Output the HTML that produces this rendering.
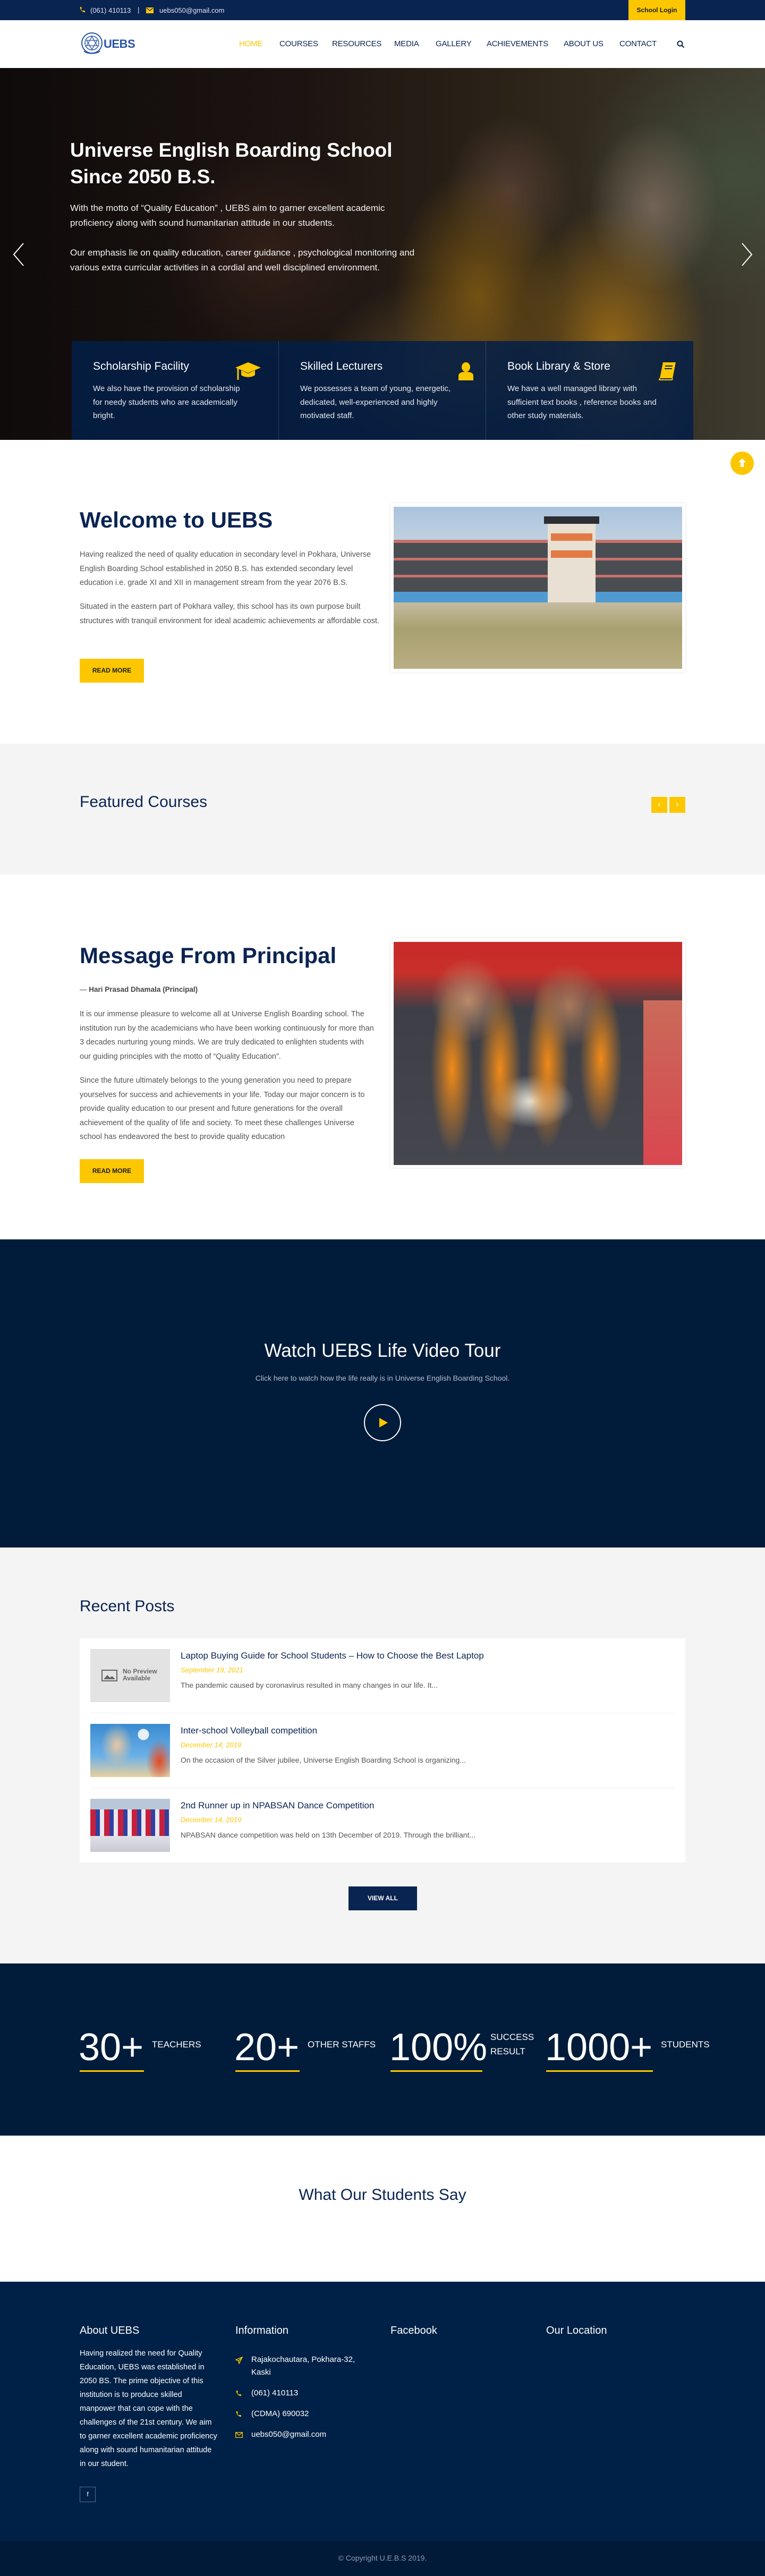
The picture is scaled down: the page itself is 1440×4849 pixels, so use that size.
<!DOCTYPE html>
<html><head><meta charset="utf-8"><style>
*{margin:0;padding:0;box-sizing:border-box}
body{width:1440px;height:4849px;position:relative;font-family:"Liberation Sans",Arial,sans-serif;background:#fff;overflow:hidden}
.a{position:absolute}
.navy{color:#0a2452}
.nav a{position:absolute;top:74px;font-size:15px;color:#0a2452;font-weight:500;letter-spacing:-.2px}
.btn{position:absolute;background:#fcc700;color:#1b1b1b;font-size:12px;font-weight:bold;text-align:center;line-height:45px;width:121px;height:45px}
.p{position:absolute;font-size:14.5px;line-height:26.5px;color:#555}
.feat{position:absolute;top:642px;width:390px;height:186px;border-right:1px solid rgba(255,255,255,.15)}
.feat h3{position:absolute;left:40px;top:36px;font-size:21px;font-weight:normal;color:#fff}
.feat p{position:absolute;left:40px;top:77px;width:290px;font-size:15px;line-height:25.5px;color:#e6e9ef}
.feat svg{position:absolute;left:308px;top:40px}
.post .t{position:absolute;left:340px;font-size:17px;color:#0a2452}
.post .d{position:absolute;left:340px;font-size:13px;font-style:italic;color:#fcc700}
.post .e{position:absolute;left:340px;font-size:14px;color:#555}
.stat .n{position:absolute;font-size:72px;color:#fff;line-height:1}
.stat .l{position:absolute;font-size:17px;color:#fff;line-height:27px}
.stat .u{position:absolute;height:3px;background:#fcc700}
.fh{position:absolute;top:4376px;font-size:20px;color:#fff}
.fi{position:absolute;left:473px;font-size:15px;color:#fff;line-height:24px}
</style></head><body>

<div class="a" style="left:0;top:0;width:1440px;height:38px;background:#0a2452"></div>
<svg class="a" style="left:149px;top:12px" width="11" height="13" viewBox="0 0 11 13"><path d="M2 1l2 0 1 3-1.5 1c.7 1.8 1.8 3 3.5 3.8L8 7.5l3 1v2.5c-5 .5-10-5-9-10z" fill="#fcc700"/></svg>
<div class="a" style="left:170px;top:12px;font-size:13px;color:#dfe4ee">(061) 410113</div>
<div class="a" style="left:259px;top:11px;font-size:13px;color:#dfe4ee">|</div>
<svg class="a" style="left:275px;top:14px" width="14" height="11" viewBox="0 0 14 11"><rect width="14" height="11" fill="#fcc700"/><path d="M1 1l6 5 6-5" stroke="#0a2452" stroke-width="1.3" fill="none"/></svg>
<div class="a" style="left:300px;top:12px;font-size:13px;color:#dfe4ee">uebs050@gmail.com</div>
<div class="a" style="left:1183px;top:0;width:107px;height:38px;background:#fcc700;font-size:12px;font-weight:bold;color:#1b1b1b;text-align:center;line-height:38px">School Login</div>

<div class="a" style="left:0;top:38px;width:1440px;height:90px;background:#fff"></div>
<svg class="a" style="left:152px;top:60px" width="42" height="46" viewBox="0 0 42 46"><circle cx="21" cy="21" r="19" fill="#fff" stroke="#2a55a8" stroke-width="2"/><circle cx="21" cy="21" r="13" fill="none" stroke="#2a55a8" stroke-width="1.5"/><path d="M21 9l10 17H11z M21 33L11 16h20z" fill="none" stroke="#2a55a8" stroke-width="1.3"/><path d="M6 36c5 6 25 6 30 0" stroke="#2a55a8" stroke-width="2" fill="none"/></svg>
<div class="a" style="left:195px;top:70px;font-size:22px;font-weight:bold;color:#2a55a8;letter-spacing:-.5px">UEBS</div>
<div class="nav">
<a style="left:450px;color:#fcc700">HOME</a>
<a style="left:526px">COURSES</a>
<a style="left:625px">RESOURCES</a>
<a style="left:742px">MEDIA</a>
<a style="left:820px">GALLERY</a>
<a style="left:916px">ACHIEVEMENTS</a>
<a style="left:1061px">ABOUT US</a>
<a style="left:1166px">CONTACT</a>
</div>
<svg class="a" style="left:1274px;top:76px" width="15" height="15" viewBox="0 0 15 15"><circle cx="6" cy="6" r="4.5" stroke="#0a2452" stroke-width="2" fill="none"/><path d="M9.5 9.5l4 4" stroke="#0a2452" stroke-width="2.2"/></svg>

<div class="a" style="left:0;top:128px;width:1440px;height:700px;overflow:hidden;background:
radial-gradient(ellipse 180px 260px at 1150px 520px,#b8801c,transparent),
radial-gradient(ellipse 160px 240px at 900px 430px,#9a6c18,transparent),
radial-gradient(ellipse 220px 160px at 820px 560px,#6e5630,transparent),
radial-gradient(ellipse 120px 160px at 1230px 260px,#8c7a6a,transparent),
radial-gradient(ellipse 120px 140px at 960px 230px,#6a4e40,transparent),
radial-gradient(ellipse 300px 250px at 1380px 200px,#4e5a44,transparent),
radial-gradient(ellipse 200px 200px at 500px 350px,#4a2e24,transparent),
linear-gradient(90deg,#1c1414,#2a1e1a 40%,#3a3020 70%,#4a4638)">
<div class="a" style="left:0;top:0;width:1440px;height:700px;background:linear-gradient(90deg,rgba(0,0,0,.45),rgba(0,0,0,.25) 60%,rgba(0,0,0,.15))"></div>
</div>
<div class="a" style="left:132px;top:258px;font-size:37px;font-weight:bold;color:#fff;line-height:50px;width:700px">Universe English Boarding School Since 2050 B.S.</div>
<div class="a" style="left:132px;top:378px;width:650px;font-size:17px;line-height:28px;color:#f2f2f2">With the motto of “Quality Education” , UEBS aim to garner excellent academic proficiency along with sound humanitarian attitude in our students.</div>
<div class="a" style="left:132px;top:462px;width:680px;font-size:17px;line-height:28px;color:#f2f2f2">Our emphasis lie on quality education, career guidance , psychological monitoring and various extra curricular activities in a cordial and well disciplined environment.</div>
<svg class="a" style="left:22px;top:456px" width="26" height="46" viewBox="0 0 26 46"><path d="M22 2L4 23l18 21" stroke="#fff" stroke-width="2" fill="none"/></svg>
<svg class="a" style="left:1393px;top:456px" width="26" height="46" viewBox="0 0 26 46"><path d="M4 2l18 21L4 44" stroke="#fff" stroke-width="2" fill="none"/></svg>
<div class="a" style="left:135px;top:642px;width:1170px;height:186px;background:rgba(2,30,72,.85)"></div>
<div class="feat" style="left:135px"><h3>Scholarship Facility</h3><p>We also have the provision of scholarship for needy students who are academically bright.</p>
<svg width="48" height="34" viewBox="0 0 48 34"><path d="M24 0L48 10 24 20 0 10z" fill="#fcc700"/><path d="M11 15v9c6 5 20 5 26 0v-9l-13 6z" fill="#fcc700"/><path d="M5 11v22" stroke="#fcc700" stroke-width="3"/></svg></div>
<div class="feat" style="left:525px"><h3>Skilled Lecturers</h3><p>We possesses a team of young, energetic, dedicated, well-experienced and highly motivated staff.</p>
<svg style="left:338px" width="28" height="34" viewBox="0 0 28 34"><ellipse cx="14" cy="9" rx="8" ry="9" fill="#fcc700"/><path d="M0 34v-8c0-6 5-8 14-8s14 2 14 8v8z" fill="#fcc700"/></svg></div>
<div class="feat" style="left:915px;border:0"><h3>Book Library &amp; Store</h3><p>We have a well managed library with sufficient text books , reference books and other study materials.</p>
<svg style="left:325px" width="34" height="34" viewBox="0 0 34 34"><path d="M8 0h24l-6 30H2z" fill="#fcc700"/><path d="M2 30l-1 3h24l1-3" stroke="#fcc700" stroke-width="2" fill="none"/><path d="M12 7h14M11 12h14" stroke="#0a2452" stroke-width="2"/></svg></div>

<div class="a" style="left:1375px;top:850px;width:44px;height:44px;border-radius:50%;background:#fcc700"></div>
<svg class="a" style="left:1389px;top:862px" width="16" height="18" viewBox="0 0 16 18"><path d="M8 1L1 8h4v9h6V8h4z" fill="#fff"/></svg>

<div class="a navy" style="left:150px;top:955px;font-size:42px;font-weight:bold">Welcome to UEBS</div>
<div class="p" style="left:150px;top:1031px;width:565px">Having realized the need of quality education in secondary level in Pokhara, Universe English Boarding School established in 2050 B.S. has extended secondary level education i.e. grade XI and XII in management stream from the year 2076 B.S.</div>
<div class="p" style="left:150px;top:1129px;width:565px">Situated in the eastern part of Pokhara valley, this school has its own purpose built structures with tranquil environment for ideal academic achievements ar affordable cost.</div>
<div class="btn" style="left:150px;top:1240px">READ MORE</div>
<div class="a" style="left:735px;top:947px;width:555px;height:318px;background:#fff;box-shadow:0 0 4px rgba(0,0,0,.12)"></div>
<div class="a" style="left:741px;top:954px;width:543px;height:305px;overflow:hidden;background:linear-gradient(#aac4de,#cfd9e0 35%,#a39468 60%,#b6a878)">
 <div class="a" style="left:0;top:62px;width:543px;height:118px;background:#4a4d52"></div>
 <div class="a" style="left:0;top:62px;width:543px;height:6px;background:#c9706a"></div>
 <div class="a" style="left:0;top:96px;width:543px;height:5px;background:#c9706a"></div>
 <div class="a" style="left:0;top:128px;width:543px;height:5px;background:#c9706a"></div>
 <div class="a" style="left:0;top:160px;width:543px;height:20px;background:#4f9bd1"></div>
 <div class="a" style="left:290px;top:28px;width:90px;height:152px;background:#e8e0d2"></div>
 <div class="a" style="left:296px;top:50px;width:78px;height:14px;background:#e27a45"></div>
 <div class="a" style="left:296px;top:82px;width:78px;height:14px;background:#e27a45"></div>
 <div class="a" style="left:283px;top:18px;width:104px;height:14px;background:#2b2e33"></div>
 <div class="a" style="left:0;top:180px;width:543px;height:125px;background:linear-gradient(#c4bba0,#a8a070 40%,#b9ae83)"></div>
</div>

<div class="a" style="left:0;top:1400px;width:1440px;height:246px;background:#f4f4f4"></div>
<div class="a navy" style="left:150px;top:1493px;font-size:30px;font-weight:500">Featured Courses</div>
<div class="a" style="left:1226px;top:1500px;width:30px;height:30px;background:#fcc700;color:#fff;text-align:center;line-height:30px;font-size:16px">‹</div>
<div class="a" style="left:1260px;top:1500px;width:30px;height:30px;background:#fcc700;color:#fff;text-align:center;line-height:30px;font-size:16px">›</div>

<div class="a navy" style="left:150px;top:1775px;font-size:42px;font-weight:bold">Message From Principal</div>
<div class="a" style="left:150px;top:1855px;font-size:13.5px;color:#444">— <b>Hari Prasad Dhamala (Principal)</b></div>
<div class="p" style="left:150px;top:1896px;width:555px">It is our immense pleasure to welcome all at Universe English Boarding school. The institution run by the academicians who have been working continuously for more than 3 decades nurturing young minds. We are truly dedicated to enlighten students with our guiding principles with the motto of “Quality Education”.</div>
<div class="p" style="left:150px;top:2021px;width:560px">Since the future ultimately belongs to the young generation you need to prepare yourselves for success and achievements in your life. Today our major concern is to provide quality education to our present and future generations for the overall achievement of the quality of life and society. To meet these challenges Universe school has endeavored the best to provide quality education</div>
<div class="btn" style="left:150px;top:2182px">READ MORE</div>
<div class="a" style="left:735px;top:1766px;width:555px;height:432px;background:#fff;box-shadow:0 0 4px rgba(0,0,0,.12)"></div>
<div class="a" style="left:741px;top:1773px;width:543px;height:420px;overflow:hidden;background:
radial-gradient(ellipse 70px 80px at 140px 110px,#b98a6a,transparent),
radial-gradient(ellipse 70px 80px at 330px 120px,#a8785a,transparent),
radial-gradient(ellipse 40px 160px at 110px 240px,#f08a18,transparent),
radial-gradient(ellipse 40px 160px at 200px 240px,#f08a18,transparent),
radial-gradient(ellipse 40px 160px at 290px 230px,#f08a18,transparent),
radial-gradient(ellipse 40px 140px at 390px 220px,#f08a18,transparent),
radial-gradient(ellipse 80px 50px at 260px 300px,#e8e4d8,transparent),
linear-gradient(#c82a2a 0,#c8302a 14%,#3e3f46 30%,#45464e)">
 <div class="a" style="left:470px;top:110px;width:73px;height:310px;background:linear-gradient(#c96a5a,#d9474f)"></div>
</div>

<div class="a" style="left:0;top:2333px;width:1440px;height:580px;background:#011c3a"></div>
<div class="a" style="left:0;top:2523px;width:1440px;text-align:center;font-size:35px;color:#fff">Watch UEBS Life Video Tour</div>
<div class="a" style="left:0;top:2586px;width:1440px;text-align:center;font-size:14px;color:#b3bfd3">Click here to watch how the life really is in Universe English Boarding School.</div>
<div class="a" style="left:685px;top:2643px;width:70px;height:70px;border-radius:50%;border:2px solid #fff"></div>
<svg class="a" style="left:714px;top:2669px" width="16" height="18" viewBox="0 0 16 18"><path d="M0 0l16 9-16 9z" fill="#fcc700"/></svg>

<div class="a" style="left:0;top:2913px;width:1440px;height:783px;background:#f4f4f4"></div>
<div class="a navy" style="left:150px;top:3007px;font-size:30px;font-weight:500">Recent Posts</div>
<div class="a" style="left:150px;top:3084px;width:1140px;height:422px;background:#fff"></div>
<div class="a" style="left:170px;top:3224px;width:1100px;height:1px;background:#eee"></div>
<div class="a" style="left:170px;top:3365px;width:1100px;height:1px;background:#eee"></div>
<div class="post">
<div class="a" style="left:170px;top:3104px;width:150px;height:100px;background:#e3e3e3"></div>
<svg class="a" style="left:191px;top:3143px" width="30" height="22" viewBox="0 0 30 22"><rect x="1" y="1" width="28" height="20" fill="none" stroke="#666" stroke-width="2"/><path d="M4 18l7-8 5 5 4-3 6 6z" fill="#666"/></svg>
<div class="a" style="left:231px;top:3140px;font-size:12px;color:#666;line-height:13px;font-weight:bold">No Preview<br>Available</div>
<div class="t" style="top:3107px">Laptop Buying Guide for School Students – How to Choose the Best Laptop</div>
<div class="d" style="top:3136px">September 19, 2021</div>
<div class="e" style="top:3164px">The pandemic caused by coronavirus resulted in many changes in our life. It...</div>

<div class="a" style="left:170px;top:3245px;width:150px;height:100px;background:radial-gradient(circle at 100px 20px,#e8f0f8 10px,transparent 11px),radial-gradient(ellipse 30px 40px at 50px 40px,#e8c8a0,transparent),radial-gradient(ellipse 25px 40px at 130px 70px,#e84a20,transparent),linear-gradient(#3a8ad0,#6ab0e8 60%,#e8d0a0)"></div>
<div class="t" style="top:3248px">Inter-school Volleyball competition</div>
<div class="d" style="top:3277px">December 14, 2019</div>
<div class="e" style="top:3305px">On the occasion of the Silver jubilee, Universe English Boarding School is organizing...</div>

<div class="a" style="left:170px;top:3386px;width:150px;height:100px;background:repeating-linear-gradient(90deg,#c8203a 0 10px,#3040a0 10px 18px,#e8e8f0 18px 26px),#b0c0d0"></div>
<div class="a" style="left:170px;top:3386px;width:150px;height:20px;background:#b8c8d8"></div>
<div class="a" style="left:170px;top:3456px;width:150px;height:30px;background:linear-gradient(#e0e0e8,#c8c8d0)"></div>
<div class="t" style="top:3389px">2nd Runner up in NPABSAN Dance Competition</div>
<div class="d" style="top:3418px">December 14, 2019</div>
<div class="e" style="top:3446px">NPABSAN dance competition was held on 13th December of 2019. Through the brilliant...</div>
</div>
<div class="a" style="left:656px;top:3551px;width:129px;height:45px;background:#0a2452;color:#fff;font-size:12px;font-weight:bold;text-align:center;line-height:45px">VIEW ALL</div>

<div class="a" style="left:0;top:3696px;width:1440px;height:324px;background:#011c3a"></div>
<div class="stat">
<div class="n" style="left:148px;top:3818px">30+</div><div class="l" style="left:286px;top:3835px">TEACHERS</div><div class="u" style="left:150px;top:3897px;width:121px"></div>
<div class="n" style="left:441px;top:3818px">20+</div><div class="l" style="left:579px;top:3835px">OTHER STAFFS</div><div class="u" style="left:443px;top:3897px;width:121px"></div>
<div class="n" style="left:733px;top:3818px">100%</div><div class="l" style="left:923px;top:3821px">SUCCESS<br>RESULT</div><div class="u" style="left:735px;top:3897px;width:173px"></div>
<div class="n" style="left:1026px;top:3818px">1000+</div><div class="l" style="left:1244px;top:3835px">STUDENTS</div><div class="u" style="left:1028px;top:3897px;width:201px"></div>
</div>

<div class="a navy" style="left:0;top:4115px;width:1440px;text-align:center;font-size:30px">What Our Students Say</div>

<div class="a" style="left:0;top:4295px;width:1440px;height:488px;background:#002147"></div>
<div class="fh" style="left:150px;font-weight:500">About UEBS</div>
<div class="fh" style="left:443px">Information</div>
<div class="fh" style="left:735px">Facebook</div>
<div class="fh" style="left:1028px">Our Location</div>
<div class="a" style="left:150px;top:4417px;width:262px;font-size:14.5px;line-height:26px;color:#fff">Having realized the need for Quality Education, UEBS was established in 2050 BS. The prime objective of this institution is to produce skilled manpower that can cope with the challenges of the 21st century. We aim to garner excellent academic proficiency along with sound humanitarian attitude in our student.</div>
<div class="a" style="left:150px;top:4681px;width:30px;height:29px;border:1px solid rgba(255,255,255,.35);color:#fff;font-size:12px;text-align:center;line-height:27px">f</div>
<svg class="a" style="left:443px;top:4436px" width="14" height="14" viewBox="0 0 14 14"><path d="M13 1L1 6l5 2 1 5z M6 8l7-7" stroke="#fcc700" stroke-width="1.4" fill="none"/></svg>
<div class="fi" style="top:4430px">Rajakochautara, Pokhara-32,<br>Kaski</div>
<svg class="a" style="left:443px;top:4499px" width="11" height="13" viewBox="0 0 11 13"><path d="M2 1l2 0 1 3-1.5 1c.7 1.8 1.8 3 3.5 3.8L8 7.5l3 1v2.5c-5 .5-10-5-9-10z" fill="#fcc700"/></svg>
<div class="fi" style="top:4493px">(061) 410113</div>
<svg class="a" style="left:443px;top:4538px" width="11" height="13" viewBox="0 0 11 13"><path d="M2 1l2 0 1 3-1.5 1c.7 1.8 1.8 3 3.5 3.8L8 7.5l3 1v2.5c-5 .5-10-5-9-10z" fill="#fcc700"/></svg>
<div class="fi" style="top:4532px">(CDMA) 690032</div>
<svg class="a" style="left:443px;top:4578px" width="14" height="11" viewBox="0 0 14 11"><rect x=".7" y=".7" width="12.6" height="9.6" fill="none" stroke="#fcc700" stroke-width="1.3"/><path d="M1 1l6 5 6-5" stroke="#fcc700" stroke-width="1.3" fill="none"/></svg>
<div class="fi" style="top:4571px">uebs050@gmail.com</div>
<div class="a" style="left:0;top:4783px;width:1440px;height:66px;background:#011a38"></div>
<div class="a" style="left:0;top:4807px;width:1440px;text-align:center;font-size:14px;color:#8d9bb3">© Copyright U.E.B.S 2019.</div>
</body></html>
